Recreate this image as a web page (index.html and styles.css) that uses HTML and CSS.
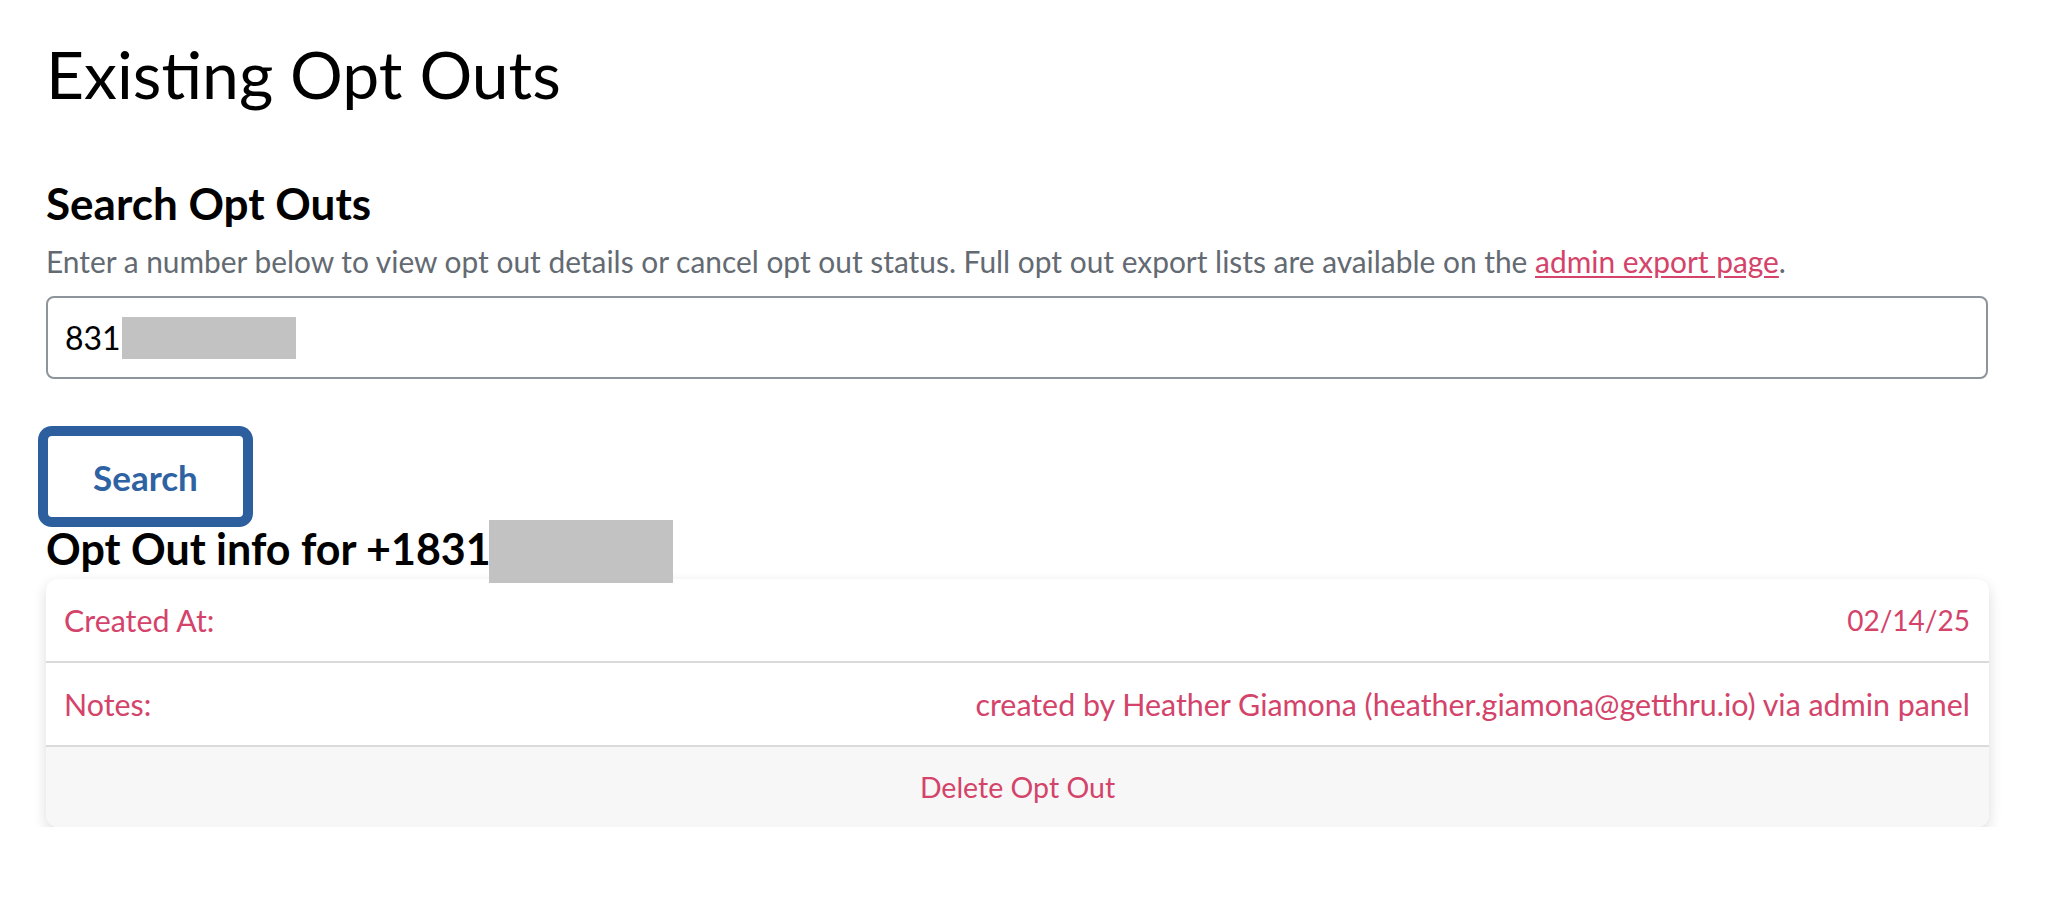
FILE: index.html
```html
<!DOCTYPE html>
<html lang="en">
<head>
<meta charset="utf-8">
<title>Existing Opt Outs</title>
<link rel="stylesheet" href="styles.css">
</head>
<body>
<main class="page">
  <h1 class="title">Existing Opt Outs</h1>
  <section class="search">
    <h2 class="section-title">Search Opt Outs</h2>
    <p class="desc">Enter a number below to view opt out details or cancel opt out status. Full opt out export lists are available on the <a href="#" class="link">admin export page</a>.</p>
    <div class="field"><span class="field-text">831</span><span class="redact redact-field"></span></div>
    <div class="actions"><button class="btn" type="button">Search</button></div>
  </section>
  <h3 class="info-title">Opt Out info for +1831<span class="redact redact-title"></span></h3>
  <div class="card">
    <div class="row"><span>Created At:</span><span class="date">02/14/25</span></div>
    <div class="row"><span>Notes:</span><span>created by Heather Giamona (heather.giamona@getthru.io) via admin panel</span></div>
    <div class="card-footer">Delete Opt Out</div>
  </div>
</main>
</body>
</html>
```
FILE: styles.css
```css
* { box-sizing: border-box; }
html, body { margin: 0; padding: 0; background: #fff; }
body {
  font-family: Lato, "Open Sans", "Liberation Sans", sans-serif;
  color: #000;
}
.page {
  width: 2053px;
  padding: 34px 65px 0 46px;
}
.title {
  margin: 0;
  font-size: 66px;
  font-weight: 400;
  line-height: 79px;
}
.section-title {
  margin: 68px 0 0;
  font-size: 44px;
  font-weight: 700;
  line-height: 44px;
}
.desc {
  margin: 21px 0 0;
  font-size: 29.9px;
  line-height: 31px;
  color: #636a72;
}
.link {
  color: #d4436a;
  text-decoration: underline;
  text-underline-offset: 3px;
}
.field {
  margin-top: 19px;
  height: 83px;
  border: 2px solid #8e949b;
  border-radius: 8px;
  padding: 0 17px;
  display: flex;
  align-items: center;
  font-size: 32px;
  color: #000;
}
.redact {
  display: inline-block;
  background: #c2c2c2;
}
.redact-field {
  width: 174px;
  height: 42px;
  margin-left: 1px;
}
.actions {
  margin-top: 55px;
  display: flex;
}
.btn {
  width: 199px;
  height: 85px;
  border: 2px solid #2d5f9f;
  border-radius: 6px;
  box-shadow: 0 0 0 8px #2d5f9f;
  background: #fff;
  color: #2e62a3;
  font-family: Lato, "Open Sans", sans-serif;
  font-size: 35px;
  font-weight: 700;
  padding: 0;
}
.info-title {
  position: relative;
  margin: 8px 0 0;
  font-size: 43px;
  font-weight: 700;
  line-height: 44px;
}
.redact-title {
  position: absolute;
  left: 443px;
  top: -7px;
  width: 184px;
  height: 63px;
}
.card {
  margin-top: 8px;
  width: 1943px;
  border-radius: 12px;
  overflow: hidden;
  background: #fff;
  box-shadow: 0 5px 14px rgba(0, 0, 0, 0.14);
  color: #d4436a;
  font-size: 30.4px;
}
.row {
  height: 84px;
  padding: 0 19px 0 18px;
  display: flex;
  align-items: center;
  justify-content: space-between;
  border-bottom: 2px solid #dadada;
}
.date {
  font-size: 28px;
}
.card-footer {
  height: 80px;
  background: #f7f7f7;
  display: flex;
  align-items: center;
  justify-content: center;
  font-size: 28.5px;
}
```
